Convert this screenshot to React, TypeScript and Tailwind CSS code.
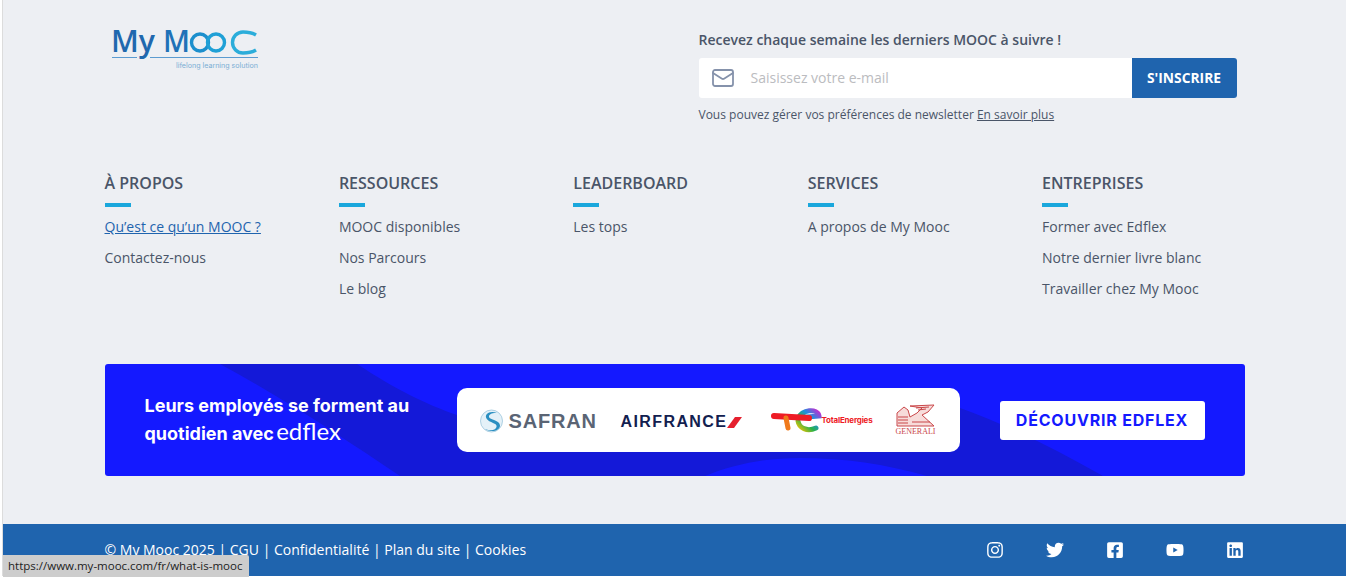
import { Mail } from 'lucide-react'
import { FaFacebookSquare, FaInstagram, FaLinkedin, FaTwitter, FaYoutube } from 'react-icons/fa'

const columns = [
  { title: 'À PROPOS', links: ['Qu’est ce qu’un MOOC ?', 'Contactez-nous'] },
  { title: 'RESSOURCES', links: ['MOOC disponibles', 'Nos Parcours', 'Le blog'] },
  { title: 'LEADERBOARD', links: ['Les tops'] },
  { title: 'SERVICES', links: ['A propos de My Mooc'] },
  { title: 'ENTREPRISES', links: ['Former avec Edflex', 'Notre dernier livre blanc', 'Travailler chez My Mooc'] },
]

function Logo() {
  return (
    <svg width="155" height="46" viewBox="0 0 155 46" className="block overflow-visible">
      <text x="6" y="26" fontFamily="Open Sans" fontSize="30" fontWeight="600" fill="#1f68ae" textLength="44" lengthAdjust="spacingAndGlyphs">My</text>
      <text x="58" y="26" fontFamily="Open Sans" fontSize="30" fontWeight="600" fill="#1f72b8" textLength="27" lengthAdjust="spacingAndGlyphs">M</text>
      <circle cx="95" cy="16.500" r="8.500" fill="none" stroke="#1c8fcd" strokeWidth="3.400" />
      <circle cx="111" cy="16.500" r="8.500" fill="none" stroke="#1fa0d6" strokeWidth="3.400" />
      <path d="M151 9C147 6.500 143 6 138 6A10.500 10.500 0 0 0 138 27C143 27 147 26.500 151 24" fill="none" stroke="#2badda" strokeWidth="3.400" />
      <path d="M7 31.500H32M45 31.500H153" stroke="#5b9bd0" strokeWidth="1" fill="none" />
      <text x="153" y="42" textAnchor="end" fontFamily="Inter" fontSize="7" fill="#7aaed3" textLength="82" lengthAdjust="spacingAndGlyphs">lifelong learning solution</text>
    </svg>
  )
}

function Safran() {
  return (
    <div className="flex w-[116px] items-center gap-[6px] pt-[1px]">
      <svg width="23" height="24" viewBox="0 0 23 24" className="shrink-0">
        <circle cx="11.500" cy="12" r="11" fill="#e4f1f8" stroke="#9cc5dc" strokeWidth="0.800" />
        <path d="M17 4C10 1 4 5 6.500 9.500S18 14 16.500 18 10 22 5 20C11 24 20 22 20 16.500S9.500 11 9 8 13 3.500 17 4Z" fill="#2a8fc1" />
      </svg>
      <span className="font-['Liberation_Sans'] text-[20px] font-bold leading-none tracking-[0.8px] text-[#5a6474]">SAFRAN</span>
    </div>
  )
}

function AirFrance() {
  return (
    <div className="flex w-[125px] items-center pt-[4px]">
      <span className="font-['Liberation_Sans'] text-[16px] font-bold leading-none tracking-[1.400px] text-[#12204f]">AIRFRANCE</span>
      <svg width="15" height="11" viewBox="0 0 15 11" className="shrink-0">
        <path d="M8 0H15L7 11H0Z" fill="#e5202e" />
      </svg>
    </div>
  )
}

function Total() {
  return (
    <div className="flex w-[101px] items-center">
      <svg width="52" height="26" viewBox="0 0 52 26" className="shrink-0">
        <defs>
          <linearGradient id="te" x1="0" x2="1" y1="1" y2="0">
            <stop offset="0" stopColor="#f5c400" />
            <stop offset="0.35" stopColor="#29b24a" />
            <stop offset="0.65" stopColor="#1f8fe0" />
            <stop offset="1" stopColor="#c52bd0" />
          </linearGradient>
        </defs>
        <path d="M27 12C30 2 47 1 48 9L30 10.500M45 21C36 25 28 21 27 14" fill="none" stroke="url(#te)" strokeWidth="5" strokeLinecap="round" />
        <path d="M3 9L38 11" stroke="#ee1c25" strokeWidth="6" strokeLinecap="round" />
        <path d="M15 11L17 21" stroke="#f07a1c" strokeWidth="5" strokeLinecap="round" />
      </svg>
      <span className="font-['Inter'] -ml-[1px] text-[8px] font-bold leading-none tracking-[-0.2px] text-[#ee1c25]">TotalEnergies</span>
    </div>
  )
}

function Generali() {
  return (
    <div className="flex w-[40px] flex-col items-center">
      <svg width="40" height="23" viewBox="0 0 40 23">
        <path d="M14 2L38 1L32 8L26 11L38 22H1V9L8 3L12 6L14 13L21 9L26 4Z" fill="#f7dcda" stroke="#c9474a" strokeWidth="1" />
        <path d="M2 13H12M2 16H12M2 19H12M16 18H34M20 4L33 3M22 6L30 5" stroke="#c9474a" strokeWidth="1" fill="none" />
      </svg>
      <span className="font-['Liberation_Serif'] text-[8px] leading-[10px] text-[#c9474a]">GENERALI</span>
    </div>
  )
}

export default function App() {
  return (
    <div className="h-[578px] overflow-hidden bg-white pb-[2px] pl-[2px] pr-[3px] font-['Open_Sans',sans-serif]">
      <footer className="relative flex h-full flex-col border-l border-[#dcdcdc] bg-[#edeff3] text-[#4a5568]">
        <div className="mx-auto flex w-[1140px] flex-1 flex-col">
          {/* Logo and newsletter */}
          <div className="flex h-[172px] justify-between pr-[8px]">
            <div className="pt-[26px]">
              <Logo />
            </div>
            <div className="w-[538px] pt-[30px]">
              <p className="text-sm font-semibold leading-[19px] text-[#4a5568]">Recevez chaque semaine les derniers MOOC à suivre !</p>
              <div className="mt-[9px] flex h-[40px] overflow-hidden rounded-[3px] bg-white">
                <div className="flex w-[52px] items-center justify-center pr-[4px]">
                  <Mail className="h-6 w-6 text-[#8592ab]" strokeWidth={1.8} />
                </div>
                <span className="flex-1 self-center text-sm text-[#bbbcc0]">Saisissez votre e-mail</span>
                <button className="w-[105px] bg-[#1f64ae] pt-[1px] text-[13.800px] font-bold text-white">S'INSCRIRE</button>
              </div>
              <p className="mt-[8px] text-xs leading-[17px] text-[#4a5568]">
                Vous pouvez gérer vos préférences de newsletter <span className="underline">En savoir plus</span>
              </p>
            </div>
          </div>

          {/* Link columns */}
          <div className="grid h-[192px] grid-cols-[repeat(5,234.400px)]">
            {columns.map((col) => (
              <div key={col.title}>
                <h3 className="text-base font-semibold leading-[22px] text-[#4a5568]">{col.title}</h3>
                <div className="mt-[9px] h-[4px] w-[26px] bg-[#1aa7dc]" />
                <ul className="mt-[10px]">
                  {col.links.map((link, i) => (
                    <li key={link} className="mb-[12px] text-sm leading-[19px]">
                      <span className={col.title === 'À PROPOS' && i === 0 ? 'text-[#1f64ae] underline' : ''}>{link}</span>
                    </li>
                  ))}
                </ul>
              </div>
            ))}
          </div>

          {/* Edflex banner */}
          <div className="relative flex h-[112px] items-center overflow-hidden rounded-[3px] bg-[#1419ff]">
            <svg className="absolute inset-0 h-full w-full" viewBox="0 0 1140 112" preserveAspectRatio="none">
              <path d="M115 0H252C290 25 320 40 352 51L855 44C900 60 950 85 998 112H822C780 100 740 94 695 94C660 94 630 100 600 112H295C240 75 180 35 115 0Z" fill="#1419d8" />
            </svg>
            <div className="relative flex w-full items-center pl-[40px]">
              <div className="w-[312px] font-['Inter'] text-[18px] font-bold leading-[26px] text-white">
                Leurs employés se forment au
                <br />
                quotidien avec <span className="-ml-[2px] font-['Lato'] text-[24px] font-normal leading-none">edflex</span>
              </div>
              <div className="flex h-[64px] w-[503px] items-center rounded-[10px] bg-white pl-[23px]">
                <Safran />
                <div className="ml-[25px]"><AirFrance /></div>
                <div className="ml-[25px]"><Total /></div>
                <div className="ml-[24px]"><Generali /></div>
              </div>
              <button className="ml-[40px] h-[39px] w-[205px] rounded-[3px] bg-white font-['Inter'] text-[16px] font-bold tracking-[0.8px] text-[#1419ff]">
                DÉCOUVRIR EDFLEX
              </button>
            </div>
          </div>
          <div className="h-[48px]" />
        </div>

        {/* Bottom bar */}
        <div className="flex h-[52px] items-center bg-[#1f64ae] text-white">
          <div className="mx-auto flex w-[1140px] items-center justify-between pr-[1px]">
            <p className="text-sm">© My Mooc 2025 | CGU | Confidentialité | Plan du site | Cookies</p>
            <div className="flex items-center gap-[42px] text-[18px]">
              <FaInstagram />
              <FaTwitter />
              <FaFacebookSquare />
              <FaYoutube />
              <FaLinkedin />
            </div>
          </div>
        </div>

        {/* Browser status bar */}
        <div className="absolute bottom-[-1px] left-0 h-[22px] rounded-tr-[2px] bg-[#cdcdcd] pl-[5px] pr-[7px] text-[11.500px] leading-[21px] text-[#222]">
          https://www.my-mooc.com/fr/what-is-mooc
        </div>
      </footer>
    </div>
  )
}
